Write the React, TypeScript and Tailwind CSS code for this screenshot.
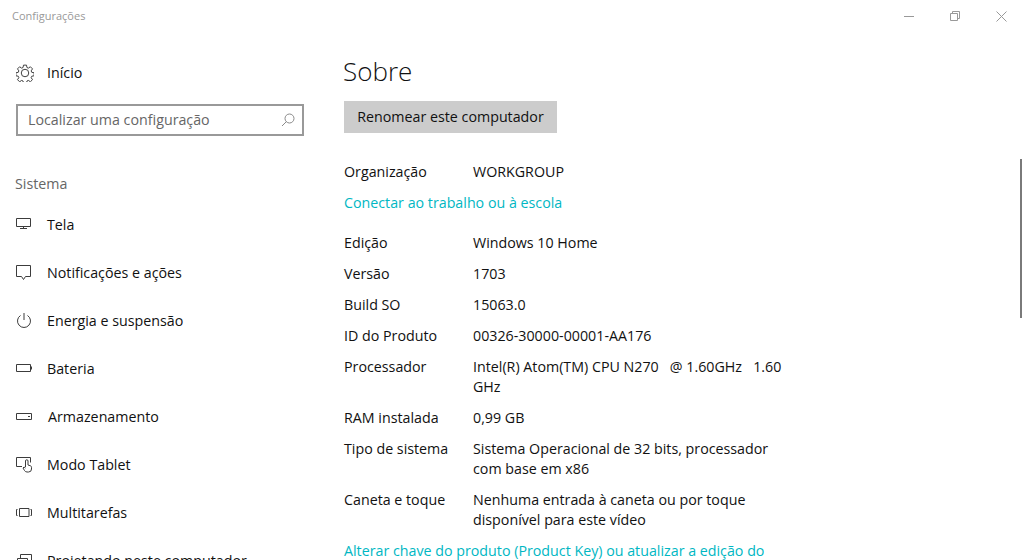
import React from 'react';

const font = { fontFamily: '"Open Sans", "Noto Sans", sans-serif' };

const Ico = ({ children }: { children: React.ReactNode }) => (
  <svg width="18" height="18" viewBox="0 0 18 18" fill="none" stroke="#3c3c3c" strokeWidth="1" className="shrink-0">
    {children}
  </svg>
);

const navItems: { label: string; icon: React.ReactNode }[] = [
  {
    label: 'Tela',
    icon: <path d="M1.500 2.500h14v8h-14zM8.500 10.500v2M5 12.500h7" />,
  },
  {
    label: 'Notificações e ações',
    icon: <path d="M1.500 1.500h14v11h-5l-2 3-2-3h-5z" />,
  },
  {
    label: 'Energia e suspensão',
    icon: <path d="M5.500 3.500a6.500 6.500 0 1 0 7 0M9 1v7" />,
  },
  {
    label: 'Bateria',
    icon: <path d="M1.500 4.500h14v7h-14zM16.500 6.500v3" />,
  },
  {
    label: 'Armazenamento',
    icon: <path d="M1.500 5.500h15v6h-15zM13 8.500h2" />,
  },
  {
    label: 'Modo Tablet',
    icon: (
      <path d="M7 10.500H1.500v-9h14v5M10.500 11V5a1.200 1.200 0 0 1 2.500 0v4l2.500.8c.7.3 1 .8 1 1.500v1.700a3 3 0 0 1-3 3h-1.500a3 3 0 0 1-2.500-1.500l-1.500-2.500 1-1 1.500 1" />
    ),
  },
  {
    label: 'Multitarefas',
    icon: <path d="M4.500 4.500h9.500v8H4.500zM2.500 5.500h-1v6h1M15.500 5.500h1v6h-1" />,
  },
  {
    label: 'Projetando neste computador',
    icon: <path d="M5.500 6V2.500h11v9H13M2.500 6.500h10v9h-10z" />,
  },
];

const Row = ({ label, children }: { label: string; children: React.ReactNode }) => (
  <div className="flex">
    <div className="w-[129px] shrink-0">{label}</div>
    <div className="w-[318px]">{children}</div>
  </div>
);

export default function App() {
  return (
    <div className="relative h-[560px] w-[1024px] overflow-hidden bg-white text-[14.25px] leading-[20px] text-[#111111]" style={font}>
      {/* title bar */}
      <div className="flex h-[32px] items-center justify-between">
        <span className="pl-3 text-[11px] text-[#999999]">Configurações</span>
        <div className="flex items-center">
          <div className="flex h-[32px] w-[46px] items-center justify-center">
            <div className="h-px w-[10px] bg-[#999999]" />
          </div>
          <div className="flex h-[32px] w-[46px] items-center justify-center">
            <svg width="10" height="10" viewBox="0 0 10 10" fill="none" stroke="#999999">
              <path d="M.5 2.500h7v7h-7zM2.500 2.500v-2h7v7h-2" />
            </svg>
          </div>
          <div className="flex h-[32px] w-[46px] items-center justify-center">
            <svg width="11" height="11" viewBox="0 0 11 11" fill="none" stroke="#999999">
              <path d="M.5.500l10 10M10.500.500l-10 10" />
            </svg>
          </div>
        </div>
      </div>

      <div className="flex">
        {/* sidebar */}
        <div className="w-[344px] shrink-0">
          <div className="mt-[16px] flex h-[48px] items-center pt-[2px] pl-[16px]">
            <svg width="18" height="18" viewBox="0 0 24 24" fill="none" stroke="#3c3c3c" strokeWidth="1.300" className="mr-[13px]">
              <circle cx="12" cy="12" r="5" />
              <path d="M10 1.500h4l.6 3.200 1.900.8 2.700-1.800 2.800 2.800-1.800 2.700.8 1.900 3.200.6v4l-3.200.6-.8 1.900 1.800 2.700-2.800 2.800-2.700-1.800-1.900.8-.6 3.200h-4l-.6-3.200-1.900-.8-2.700 1.800-2.800-2.800 1.800-2.700-.8-1.900-3.200-.6v-4l3.200-.6.8-1.900-1.800-2.700 2.800-2.800 2.700 1.800 1.900-.8z" />
            </svg>
            <span>Início</span>
          </div>
          <div className="mt-[8px] ml-[16px] flex h-[32px] w-[288px] items-center justify-between border-2 border-[#999999] pr-[7px] pl-[10px] text-[#666666]">
            <span>Localizar uma configuração</span>
            <svg width="14" height="14" viewBox="0 0 14 14" fill="none" stroke="#8a8a8a">
              <circle cx="8.500" cy="5.500" r="4.500" />
              <path d="M5.500 8.500l-4.500 4.500" />
            </svg>
          </div>
          <div className="mt-[38px] mb-[7px] pl-[15px] text-[#666666]">Sistema</div>
          {navItems.map((item) => (
            <div key={item.label} className="flex h-[48px] items-center gap-[14px] pl-[15px]">
              <Ico>{item.icon}</Ico>
              <span className={item.label === 'Armazenamento' ? 'ml-px whitespace-nowrap' : 'whitespace-nowrap'}>{item.label}</span>
            </div>
          ))}
        </div>

        {/* content */}
        <div className="min-w-0 flex-1">
          <h1 className="-ml-px h-[56px] pt-[21px] text-[26px] leading-[36px] font-light text-[#111111]">Sobre</h1>
          <div className="mt-[13px] flex h-[32px] w-[213px] items-center justify-center bg-[#cccccc]">Renomear este computador</div>
          <div className="mt-[29px] flex flex-col">
            <Row label="Organização">WORKGROUP</Row>
            <div className="mt-[11px] text-[#00b7c3]">Conectar ao trabalho ou à escola</div>
            <div className="mt-[20px] flex flex-col gap-[11px]">
              <Row label="Edição">Windows 10 Home</Row>
              <Row label="Versão">1703</Row>
              <Row label="Build SO">15063.0</Row>
              <Row label="ID do Produto">00326-30000-00001-AA176</Row>
              <Row label="Processador">Intel(R) Atom(TM) CPU N270 &nbsp; @ 1.60GHz &nbsp; 1.60 GHz</Row>
              <Row label="RAM instalada">0,99 GB</Row>
              <Row label="Tipo de sistema">Sistema Operacional de 32 bits, processador com base em x86</Row>
              <Row label="Caneta e toque">Nenhuma entrada à caneta ou por toque disponível para este vídeo</Row>
            </div>
            <div className="mt-[11px] whitespace-nowrap text-[#00b7c3]">Alterar chave do produto (Product Key) ou atualizar a edição do</div>
          </div>
        </div>
      </div>

      {/* scrollbar */}
      <div className="absolute top-[159px] right-[2px] h-[159px] w-[2px] bg-[#7a7a7a]" />
    </div>
  );
}
